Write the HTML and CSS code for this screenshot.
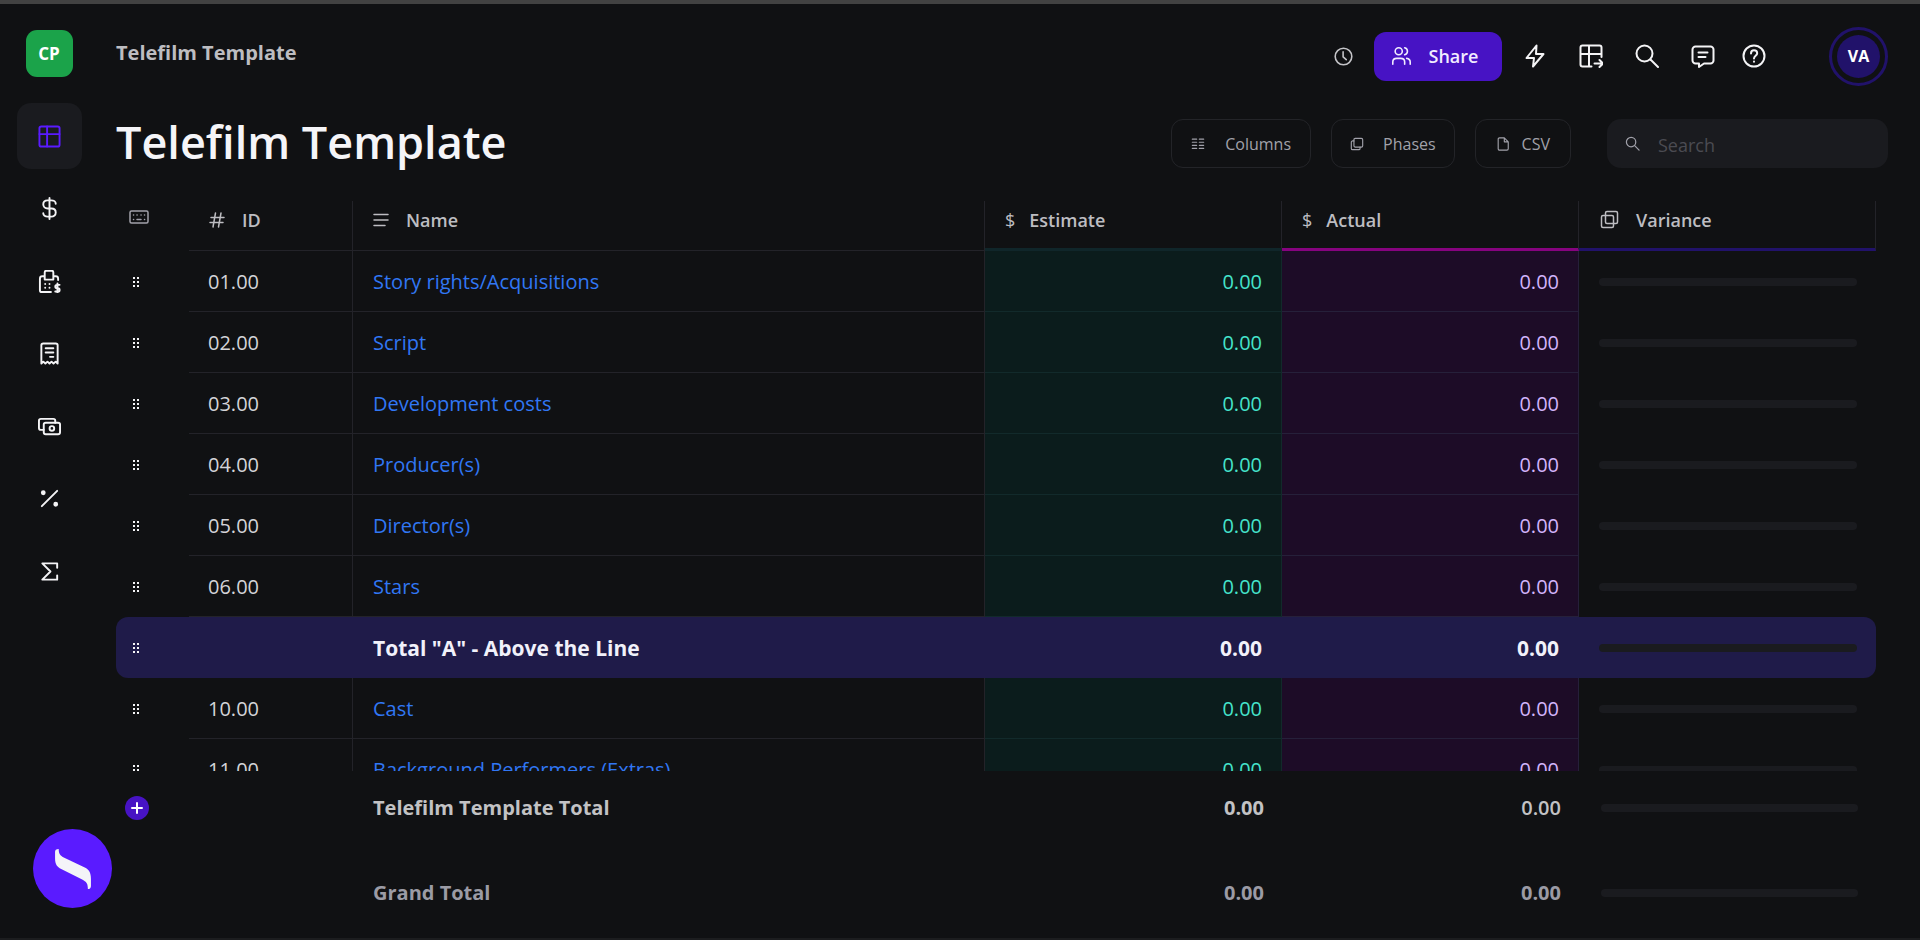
FILE: index.html
```html
<!DOCTYPE html>
<html lang="en">
<head>
<meta charset="utf-8">
<title>Telefilm Template</title>
<link rel="stylesheet" href="styles.css">
</head>
<body>
<div class="app">
  <aside class="sidebar">
    <button class="workspace">CP</button>
    <nav class="nav" aria-label="Budget sections">
      <a class="nav-item active" href="#" aria-label="Budget"><svg class="icon" viewBox="0 0 24 24"><rect x="1.5" y="1.5" width="21" height="21" rx="2"/><path d="M1.500 9.500h21M9.500 1.500v21"/></svg></a>
      <a class="nav-item" href="#" aria-label="Currency"><svg class="icon" viewBox="0 0 24 24"><path d="M12 1v22M18.500 7c0-2-2-3.500-4.500-3.500h-4C7.500 3.500 5.500 5 5.500 7.600S7.500 12 10 12h4c2.500 0 4.500 1.600 4.500 4.200s-2 4.300-4.500 4.300h-4c-2.500 0-4.500-1.500-4.500-3.500"/></svg></a>
      <a class="nav-item" href="#" aria-label="Purchases"><svg class="icon" viewBox="0 0 24 24"><path d="M7 10V2.500C7 1.500 7.700.8 8.700.8h5.600c1 0 1.700.7 1.700 1.700V10zM7 6.500H4.500c-1.500 0-2.500 1-2.500 2.500v12c0 1.200.8 2 2 2h9.500M16 6.500h2.500c1.500 0 2.500 1 2.500 2.500v1.500"/><path d="M22.500 15.500h-2.700a1.700 1.700 0 0 0 0 3.500h1a1.700 1.700 0 0 1 0 3.500H18M20.300 14v10"/><path class="dots" d="M7.500 14.500v.1M12 14.500v.1M7.500 18.500v.1M12 18.500v.1"/></svg></a>
      <a class="nav-item" href="#" aria-label="Receipts"><svg class="icon" viewBox="0 0 24 24"><path d="M3.500 22.500v-19c0-1 .8-2 2-2h13c1.200 0 2 1 2 2v19l-2.100-2-2.200 2-2.100-2-2.100 2-2.100-2-2.200 2-2.100-2zM8 6.500h8M8 11h8M12.500 15.500H16"/></svg></a>
      <a class="nav-item" href="#" aria-label="Payments"><svg class="icon" viewBox="0 0 24 24"><rect x="6" y="8" width="17" height="12" rx="2"/><circle cx="14.500" cy="14" r="2.400"/><path d="M6 15.500H3c-1.200 0-2-.8-2-2V6c0-1.200.8-2 2-2h13c1.200 0 2 .8 2 2v2"/></svg></a>
      <a class="nav-item" href="#" aria-label="Percentages"><svg class="icon" viewBox="0 0 24 24"><path d="M20 4 4 20"/><circle class="solid" cx="5.500" cy="6" r="1.500"/><circle class="solid" cx="18.500" cy="18" r="1.500"/></svg></a>
      <a class="nav-item" href="#" aria-label="Sums"><svg class="icon" viewBox="0 0 24 24"><path d="M20 8V3.500H4.500L13 12l-8.500 8.500H20V16"/></svg></a>
    </nav>
  </aside>

  <main class="main">
    <header class="topbar">
      <p class="crumb">Telefilm Template</p>
      <div class="actions">
        <button class="tool small" aria-label="History"><svg class="icon" viewBox="0 0 24 24"><circle cx="12" cy="12" r="10.500"/><path d="M11.500 6v6.500l4 3.500"/></svg></button>
        <button class="share"><svg class="icon" viewBox="0 0 24 24"><circle cx="8.500" cy="6" r="4.500"/><path d="M1 22.500v-3c0-3 2.500-4.500 5-4.500h5c2.500 0 5 1.500 5 4.500v3M16 1.500c2.500.7 3.500 2.500 3.500 4.500S18.500 9.800 16 10.500M18.500 15c2.700.4 4.500 2 4.500 4.500v3"/></svg><span>Share</span></button>
        <button class="tool" aria-label="Quick actions"><svg class="icon" viewBox="0 0 24 24"><path d="M13.500 1.500 3.500 14h7.500l-1 8.500L20.500 10H13z"/></svg></button>
        <button class="tool" aria-label="Export table"><svg class="icon" viewBox="0 0 24 24"><path d="M12.500 22.500h-9c-1.200 0-2-.8-2-2v-17c0-1.200.8-2 2-2h17c1.200 0 2 .8 2 2v9.500M1.500 10h21M10 1.500v21M15.500 19.500H24M20.500 16l3.500 3.500-3.500 3.500"/></svg></button>
        <button class="tool" aria-label="Search"><svg class="icon" viewBox="0 0 24 24"><circle cx="9.500" cy="9.500" r="8"/><path d="m15.500 15.500 7.500 7.500"/></svg></button>
        <button class="tool" aria-label="Comments"><svg class="icon" viewBox="0 0 24 24"><path d="M4.500 2.500h15c1.600 0 3 1.400 3 3v11c0 1.600-1.400 3-3 3H13l-5 3.500v-3.500H4.500c-1.600 0-3-1.400-3-3v-11c0-1.600 1.400-3 3-3zM7.500 8.500h9M7.500 13h7"/></svg></button>
        <button class="tool last" aria-label="Help"><svg class="icon" viewBox="0 0 24 24"><circle cx="12" cy="12" r="10.500"/><path d="M9 9.500C9 7.500 10.200 6.300 12 6.300s3.200 1.200 3.200 3c0 2.400-3.200 2.700-3.200 5.200M12 17.600v.2"/></svg></button>
        <button class="avatar"><span>VA</span></button>
      </div>
    </header>

    <div class="heading">
      <h1 class="title">Telefilm Template</h1>
      <div class="filters">
        <button class="filter"><svg class="icon" viewBox="0 0 16 16"><path d="M1.500 2.500h5M1.500 6h5M1.500 9.500h5M1.500 13h5M9.500 2.500h5M9.500 6h5M9.500 9.500h5M9.500 13h5"/></svg>Columns</button>
        <button class="filter snug"><svg class="icon" viewBox="0 0 16 16"><rect x="4.500" y="1.500" width="10" height="10" rx="1.500"/><path d="M4.500 4.500H3c-.8 0-1.500.7-1.500 1.500v7c0 .8.700 1.500 1.500 1.500h7c.8 0 1.500-.7 1.500-1.500v-1.500"/></svg>Phases</button>
        <button class="filter tight"><svg class="icon" viewBox="0 0 16 16"><path d="M4 1h5.500L14 5.500v8c0 .8-.7 1.500-1.500 1.500H4c-.8 0-1.500-.7-1.500-1.500v-11C2.500 1.700 3.200 1 4 1zM9.500 1v4.500H14"/></svg>CSV</button>
        <label class="search"><svg class="icon" viewBox="0 0 16 16"><circle cx="6.500" cy="6.500" r="5"/><path d="m10.300 10.300 4.700 4.700"/></svg><input type="search" placeholder="Search" aria-label="Search accounts"></label>
      </div>
    </div>

    <div class="scroller">
      <table class="grid">
        <colgroup><col class="c-drag"><col class="c-id"><col><col class="c-num"><col class="c-num"><col class="c-num"></colgroup>
        <thead>
          <tr>
            <th class="drag" aria-label="Keyboard shortcuts"><svg class="keys" viewBox="0 0 20 14"><rect x="1" y="1" width="18" height="12" rx="1.500"/><path d="M4.500 5h.1M8 5h.1M12 5h.1M15.500 5h.1M4.500 9.500h.1M15.500 9.500h.1M8 9.500h4"/></svg></th>
            <th><span class="head"><svg class="icon" viewBox="0 0 16 16"><path d="M6.500 1 4 15M12 1 9.500 15M2 5.500h13M1 10.500h13"/></svg>ID</span></th>
            <th><span class="head"><svg class="icon" viewBox="0 0 16 16"><path d="M1 2.500h14M1 8h14M1 13.500h11"/></svg>Name</span></th>
            <th class="estimate"><span class="head money"><i>$</i>Estimate</span></th>
            <th class="actual"><span class="head money"><i>$</i>Actual</span></th>
            <th class="variance"><span class="head"><svg class="icon big" viewBox="0 0 20 20"><rect x="2.500" y="5.500" width="12" height="12" rx="1.500"/><rect x="6.500" y="1.500" width="12" height="12" rx="1.500"/></svg>Variance</span></th>
          </tr>
        </thead>
        <tbody>
          <tr><td class="drag"><button class="handle" aria-label="Move row"></button></td><td>01.00</td><td class="name"><a href="#">Story rights/Acquisitions</a></td><td class="estimate">0.00</td><td class="actual">0.00</td><td class="variance"><div class="bar"></div></td></tr>
          <tr><td class="drag"><button class="handle" aria-label="Move row"></button></td><td>02.00</td><td class="name"><a href="#">Script</a></td><td class="estimate">0.00</td><td class="actual">0.00</td><td class="variance"><div class="bar"></div></td></tr>
          <tr><td class="drag"><button class="handle" aria-label="Move row"></button></td><td>03.00</td><td class="name"><a href="#">Development costs</a></td><td class="estimate">0.00</td><td class="actual">0.00</td><td class="variance"><div class="bar"></div></td></tr>
          <tr><td class="drag"><button class="handle" aria-label="Move row"></button></td><td>04.00</td><td class="name"><a href="#">Producer(s)</a></td><td class="estimate">0.00</td><td class="actual">0.00</td><td class="variance"><div class="bar"></div></td></tr>
          <tr><td class="drag"><button class="handle" aria-label="Move row"></button></td><td>05.00</td><td class="name"><a href="#">Director(s)</a></td><td class="estimate">0.00</td><td class="actual">0.00</td><td class="variance"><div class="bar"></div></td></tr>
          <tr><td class="drag"><button class="handle" aria-label="Move row"></button></td><td>06.00</td><td class="name"><a href="#">Stars</a></td><td class="estimate">0.00</td><td class="actual">0.00</td><td class="variance"><div class="bar"></div></td></tr>
          <tr class="subtotal"><td class="drag"><button class="handle" aria-label="Move row"></button></td><td></td><td class="name">Total "A" - Above the Line</td><td class="estimate">0.00</td><td class="actual">0.00</td><td class="variance"><div class="bar"></div></td></tr>
          <tr><td class="drag"><button class="handle" aria-label="Move row"></button></td><td>10.00</td><td class="name"><a href="#">Cast</a></td><td class="estimate">0.00</td><td class="actual">0.00</td><td class="variance"><div class="bar"></div></td></tr>
          <tr><td class="drag"><button class="handle" aria-label="Move row"></button></td><td>11.00</td><td class="name"><a href="#">Background Performers (Extras)</a></td><td class="estimate">0.00</td><td class="actual">0.00</td><td class="variance"><div class="bar"></div></td></tr>
        </tbody>
      </table>
    </div>

    <table class="totals">
      <colgroup><col class="c-drag"><col class="c-id"><col><col class="c-num"><col class="c-num"><col class="c-num"></colgroup>
      <tbody>
        <tr><td class="drag"><button class="add" aria-label="Add row"><svg class="icon" viewBox="0 0 12 12"><path d="M6 1v10M1 6h10"/></svg></button></td><td></td><th scope="row">Telefilm Template Total</th><td class="num">0.00</td><td class="num light">0.00</td><td><div class="bar"></div></td></tr>
        <tr class="grand"><td></td><td></td><th scope="row">Grand Total</th><td class="num">0.00</td><td class="num">0.00</td><td><div class="bar"></div></td></tr>
      </tbody>
    </table>
  </main>
</div>
<button class="launcher" aria-label="Open assistant"><svg viewBox="0 0 35 39"><path d="M3.600 0C1 0 0 1 0 3v6c0 6 2 8.500 6 10.500l20 10c5 2.500 6 4.500 6 9.500 2 0 3-1 3-3v-7c0-6-2-9-6-11L9 8.500C4.500 6.500 3.500 4 3.600 0z"/></svg></button>
</body>
</html>
```
FILE: styles.css
```css
* { box-sizing: border-box; }

body {
  margin: 0;
  background: #101113;
  color: #d4d4d8;
  font-family: "Open Sans", "Noto Sans", sans-serif;
  font-size: 20px;
  line-height: 28px;
}

button, input { font: inherit; color: inherit; }
button { border: 0; padding: 0; background: none; display: flex; align-items: center; justify-content: center; }
a { color: #3177f4; text-decoration: none; }

.icon { fill: none; stroke: currentColor; stroke-width: 2; stroke-linecap: round; stroke-linejoin: round; flex: none; }
.icon .solid { fill: currentColor; }
.icon .dots { stroke-width: 2; }

.app {
  display: flex;
  height: 100vh;
  border-top: 4px solid #424242;
  border-bottom: 2px solid #1c1d1f;
}

.sidebar { width: 98px; display: flex; flex-direction: column; align-items: center; padding-top: 26px; }
.workspace { width: 47px; height: 47px; border-radius: 11px; background: #1ba34a; color: #fff; font-size: 17px; font-weight: 700; }
.nav { display: flex; flex-direction: column; justify-content: space-between; height: 501px; margin-top: 26px; }
.nav-item { display: flex; align-items: center; justify-content: center; width: 65px; height: 66px; border-radius: 14px; color: #f4f4f6; }
.nav-item .icon { width: 23px; height: 23px; }
.nav-item.active { background: #1a1b1f; color: #5a1bff; }

.main { flex: 1; min-width: 0; display: flex; flex-direction: column; padding: 22px 32px 0 18px; }

.topbar { display: flex; justify-content: space-between; align-items: center; height: 60px; }
.crumb { margin: 0 0 6px; font-weight: 700; color: #bdbdc1; }
.actions { display: flex; align-items: center; }
.tool { width: 56px; height: 48px; color: #f4f4f6; }
.tool .icon { width: 24px; height: 24px; }
.tool.last { width: 46px; }
.tool.small { width: 40px; margin-right: 11px; color: #c4c4c8; }
.tool.small .icon { width: 19px; height: 19px; }
.share { gap: 18px; width: 128px; height: 49px; padding-right: 6px; margin-right: 5px; border-radius: 12px; background: #4713c4; color: #f1edff; font-size: 18px; font-weight: 600; }
.share .icon { width: 19px; height: 22px; }
.avatar { width: 59px; height: 59px; margin-left: 52px; border: 3px solid #21126a; border-radius: 50%; color: #fff; font-size: 16px; font-weight: 700; }
.avatar span { display: grid; place-items: center; width: 43px; height: 43px; border-radius: 50%; background: #21126a; }

.heading { display: flex; justify-content: space-between; height: 82px; margin-top: 33px; }
.title { margin: 0; font-size: 45px; line-height: 46px; font-weight: 600; color: #f5f5f8; }
.filters { display: flex; }
.filter { gap: 20px; height: 49px; padding: 0 19px; margin-right: 20px; border: 1px solid #232428; border-radius: 12px; color: #a1a1aa; font-size: 16px; }
.filter .icon { width: 14px; height: 14px; }
.filter.snug { gap: 19px; padding: 0 18px; }
.filter.tight { gap: 12px; padding: 0 20px; margin-right: 36px; }
.search { display: flex; align-items: center; gap: 18px; width: 281px; height: 49px; padding: 0 18px; border-radius: 14px; background: #1a1b1f; color: #a1a1aa; }
.search .icon { width: 15px; height: 15px; }
.filter .icon, .search .icon { stroke-width: 1.3; }
.search input { width: 100%; min-width: 0; padding: 2px 0 0; border: 0; outline: 0; background: none; font-size: 18px; }
.search input::placeholder { color: #4b4b52; opacity: 1; }

.scroller { flex: 1; min-height: 0; overflow: hidden; margin-right: 12px; }
.grid, .totals { width: 100%; table-layout: fixed; border-collapse: separate; border-spacing: 0; }
.c-drag { width: 73px; }
.c-id { width: 164px; }
.c-num { width: 297px; }

.grid th { height: 50px; padding: 0 20px 12px; border-right: 1px solid #232329; border-bottom: 1px solid #232329; text-align: left; font-weight: 600; color: #bdbdc1; }
.grid .drag { padding: 0 0 0 13px; border: 0; }
.grid th.drag { padding-bottom: 18px; }
.grid th.estimate { padding-bottom: 10px; border-bottom: 3px solid #10262a; }
.grid th.actual { padding-bottom: 10px; border-bottom: 3px solid #86037f; }
.grid th.variance { padding-bottom: 10px; border-bottom: 3px solid #21126a; }
.head { display: flex; align-items: center; gap: 17px; font-size: 18px; }
.head .icon { width: 16px; height: 16px; stroke-width: 1.5; }
.head .icon.big { width: 20px; height: 20px; }
.head.money { gap: 14px; }
.head i { font-style: normal; font-weight: 400; }
.keys { display: block; width: 20px; height: 14px; fill: none; stroke: #a1a1aa; stroke-width: 1.5; stroke-linecap: round; }

.grid td { height: 61px; padding: 2px 19px 0; border-right: 1px solid #232329; border-bottom: 1px solid #232329; }
.grid td.name { padding-left: 20px; }
.grid td.estimate { background: #0b1c1c; border-color: #122a2b; color: #45e3cb; text-align: right; }
.grid td.actual { background: #1d0c27; border-color: #26203a; color: #d3b4fb; text-align: right; }
.grid td.variance { padding: 0 19px 0 20px; border: 0; }
.handle { width: 8px; height: 12px; margin-left: 3px; background: radial-gradient(circle, #f4f4f6 1px, transparent 1px) 0 0 / 4px 4px; }
.bar { height: 8px; border-radius: 4px; background: #1a1b1f; }

.grid .subtotal td { background: #1f1b49; border-color: #1f1b49; color: #f1f1fa; font-size: 21px; font-weight: 700; }
.subtotal td:first-child { border-radius: 12px 0 0 12px; }
.subtotal td:last-child { border-radius: 0 12px 12px 0; }

.totals { width: auto; margin-right: 10px; }
.totals td, .totals th { padding: 23px 20px 16px; text-align: left; color: #c2c2c4; font-weight: 700; }
.totals .drag { padding-left: 9px; }
.totals .num { text-align: right; }
.totals .light { font-weight: 600; }
.totals .grand td, .totals .grand th { padding-top: 41px; padding-bottom: 31px; color: #9b9ba5; }
.add { width: 24px; height: 24px; border-radius: 50%; background: #4713c4; color: #fff; }
.add .icon { width: 12px; height: 12px; }

.launcher { position: fixed; left: 33px; bottom: 32px; width: 79px; height: 79px; border-radius: 50%; background: #5a1bff; }
.launcher svg { width: 36px; height: 40px; fill: #f4f4f8; }
```
